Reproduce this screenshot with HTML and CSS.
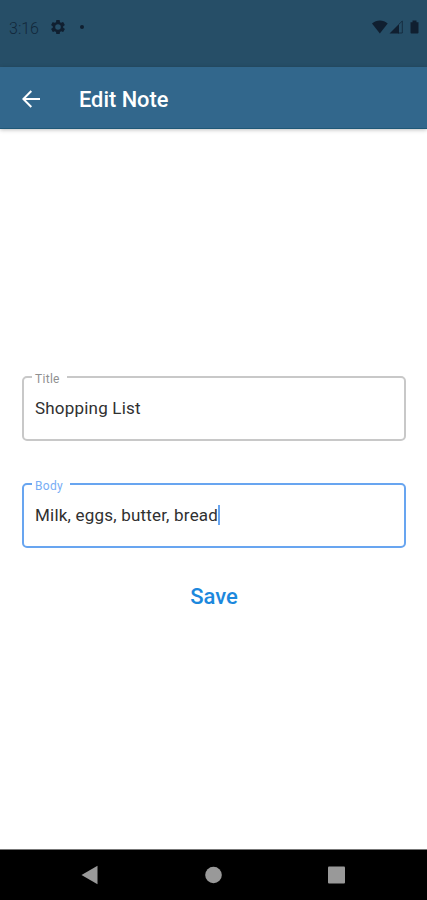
FILE: index.html
```html
<!DOCTYPE html>
<html lang="en">
<head>
<meta charset="utf-8">
<title>Edit Note</title>
<link rel="stylesheet" href="styles.css">
</head>
<body>
<div class="screen">
  <header class="status">
    <span class="clock">3:16</span>
    <svg class="gear" width="14" height="14" viewBox="2 2 20 20"><path fill-rule="evenodd" d="M19.4 13a7.800 7.800 0 0 0 0-2l2.100-1.650a.5.5 0 0 0 .12-.64l-2-3.460a.5.5 0 0 0-.61-.22l-2.490 1a7.300 7.300 0 0 0-1.690-.98l-.38-2.650A.49.49 0 0 0 14 2h-4a.49.49 0 0 0-.49.42l-.38 2.650a7.700 7.700 0 0 0-1.690.98l-2.490-1a.49.49 0 0 0-.61.22l-2 3.460a.49.49 0 0 0 .12.640L4.570 11a7.900 7.900 0 0 0 0 2l-2.110 1.650a.5.5 0 0 0-.12.640l2 3.460c.12.220.390.300.610.220l2.490-1c.52.400 1.080.730 1.690.980l.38 2.650c.03.240.240.420.490.420h4c.25 0 .46-.18.490-.42l.38-2.650a7.300 7.300 0 0 0 1.690-.98l2.490 1c.23.090.490 0 .61-.22l2-3.460a.5.5 0 0 0-.12-.64zM12 16a4 4 0 1 1 0-8 4 4 0 0 1 0 8z"/></svg>
    <span class="dot"></span>
    <svg class="signals" width="48" height="14" viewBox="0 0 48 14">
      <path d="M0 3.500C4.300-.5 11.400-.5 15.700 3.500L7.850 13.500z"/>
      <path d="M17.500 13.500L27 4V13.500z"/>
      <path class="outline" d="M27 4.200L30.300 1V13H26"/>
      <path d="M38.500 2.200H40.500V.5H44.500V2.200H46.500V12.500a1 1 0 0 1-1 1H39.500a1 1 0 0 1-1-1z"/>
    </svg>
  </header>
  <div class="appbar">
    <svg class="back" width="18" height="18" viewBox="0 0 18 18"><path d="M18 9H1.500M9.300 1L1.300 9l8 8"/></svg>
    <h1>Edit Note</h1>
  </div>
  <main>
    <fieldset class="field"><legend><span class="label">Title</span></legend><div class="value">Shopping List</div></fieldset>
    <fieldset class="field active"><legend><span class="label">Body</span></legend><div class="value">Milk, eggs, butter, bread<span class="caret"></span></div></fieldset>
    <button class="save">Save</button>
  </main>
  <nav class="navbar">
    <svg width="17" height="20" viewBox="0 0 17 20"><path d="M.5 10L16.500 .7V19.300z"/></svg>
    <svg width="17" height="20" viewBox="0 0 17 20"><circle cx="8.500" cy="10" r="8.300"/></svg>
    <svg width="17" height="20" viewBox="0 0 17 20"><rect y="1.600" width="17" height="17" rx="1"/></svg>
  </nav>
</div>
</body>
</html>
```
FILE: styles.css
```css
* { box-sizing: border-box; }
body { margin: 0; font-family: Roboto, "Liberation Sans", sans-serif; background: #fff; }
.screen { height: 900px; display: flex; flex-direction: column; }
.status { height: 67px; padding: 20px 7px 0 9px; display: flex; align-items: flex-start; background: #264e67; }
.clock { width: 42px; padding-top: 1px; font-size: 16px; line-height: 16px; font-weight: 300; color: #12283b; }
.gear, .signals { fill: #101f30; }
.dot { width: 4px; height: 4px; margin: 5px 0 0 15px; border-radius: 50%; background: #101f30; }
.signals { margin-left: auto; }
.outline { fill: none; stroke: #101f30; stroke-width: 1; opacity: .7; }
.appbar { height: 62px; padding: 2px 0 0 22px; display: flex; align-items: center; background: #32678c; border-bottom: 1px solid #1f5877; box-shadow: 0 1px 4px rgba(0, 0, 0, .25); }
.back { fill: none; stroke: #fff; stroke-width: 2; }
h1 { margin: 2px 0 0 39px; font-size: 21.800px; line-height: 28px; font-weight: 500; color: #fff; }
main { flex: 1; padding: 241px 21px 0 22px; display: flex; flex-direction: column; align-items: center; }
.field { width: 100%; min-width: 0; height: 71px; margin: 0 0 36px; padding: 0 12px; border: 2px solid #c8c8c8; border-radius: 5px; }
.field legend { margin-left: -4px; padding: 0 6px 0 4px; font-size: 12px; line-height: 14px; color: #909090; letter-spacing: .3px; }
.label { position: relative; top: 2px; left: -1px; }
.value { display: flex; align-items: center; margin-top: 13px; margin-left: -1px; font-size: 17px; line-height: 22px; letter-spacing: .2px; color: #303030; }
.field.active { border-color: #68a5f0; margin-bottom: 35px; }
.active legend { color: #78adf5; }
.caret { width: 2px; height: 20px; background: #68a5f0; }
.save { border: 0; padding: 0; background: none; font: 500 22px/28px Roboto, sans-serif; color: #1c88dd; }
.navbar { height: 51px; padding: 0 82px 0 81px; display: flex; align-items: center; justify-content: space-between; background: #000; border-top: 1px solid #777; }
.navbar svg { fill: #999; }
```
